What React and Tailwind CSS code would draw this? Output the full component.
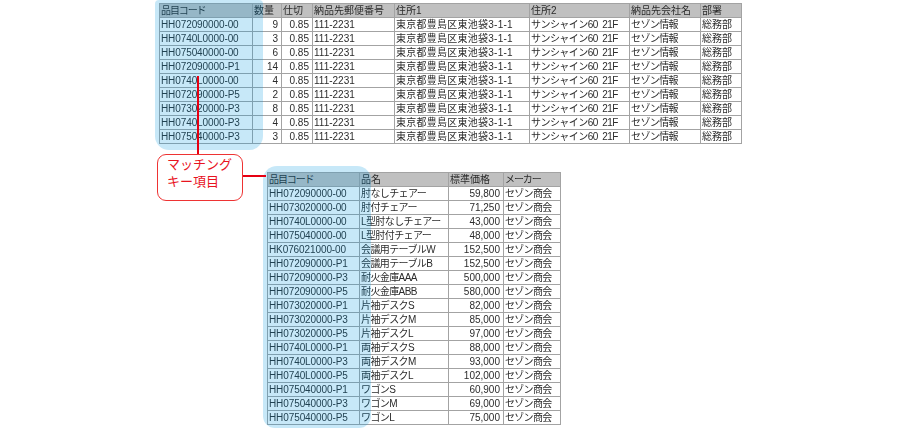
const ORDER_COLS = ['w-[93px]', 'w-[29px]', 'w-[31px]', 'w-[82px]', 'w-[135px]', 'w-[100px]', 'w-[71px]', 'w-[41px]'];
const ORDER_HEAD = ['品目コード', '数量', '仕切', '納品先郵便番号', '住所1', '住所2', '納品先会社名', '部署'];
const ORDER_TRACK = ['tracking-[-0.1px]', '', '', '', 'tracking-[0.25px]', 'tracking-[-0.55px]', 'tracking-[-0.6px]', ''];
const ORDERS = [
  ['HH072090000-00', 9],
  ['HH0740L0000-00', 3],
  ['HH075040000-00', 6],
  ['HH072090000-P1', 14],
  ['HH0740L0000-00', 4],
  ['HH072090000-P5', 2],
  ['HH073020000-P3', 8],
  ['HH0740L0000-P3', 4],
  ['HH075040000-P3', 3],
];

const ITEM_COLS = ['w-[92px]', 'w-[89px]', 'w-[55px]', 'w-[57px]'];
const ITEM_HEAD = ['品目コード', '品名', '標準価格', 'メーカー'];
const ITEM_TRACK = ['tracking-[-0.1px]', 'tracking-[-0.6px]', '', 'tracking-[-0.7px]'];
const ITEMS = [
  ['HH072090000-00', '肘なしチェアー', '59,800'],
  ['HH073020000-00', '肘付チェアー', '71,250'],
  ['HH0740L0000-00', 'L型肘なしチェアー', '43,000'],
  ['HH075040000-00', 'L型肘付チェアー', '48,000'],
  ['HK076021000-00', '会議用テーブルW', '152,500'],
  ['HH072090000-P1', '会議用テーブルB', '152,500'],
  ['HH072090000-P3', '耐火金庫AAA', '500,000'],
  ['HH072090000-P5', '耐火金庫ABB', '580,000'],
  ['HH073020000-P1', '片袖デスクS', '82,000'],
  ['HH073020000-P3', '片袖デスクM', '85,000'],
  ['HH073020000-P5', '片袖デスクL', '97,000'],
  ['HH0740L0000-P1', '両袖デスクS', '88,000'],
  ['HH0740L0000-P3', '両袖デスクM', '93,000'],
  ['HH0740L0000-P5', '両袖デスクL', '102,000'],
  ['HH075040000-P1', 'ワゴンS', '60,900'],
  ['HH075040000-P3', 'ワゴンM', '69,000'],
  ['HH075040000-P5', 'ワゴンL', '75,000'],
];

const CELL = 'h-[14px] border border-[#a3a3a3] px-px py-0 leading-[12px] whitespace-pre overflow-hidden';

function Sheet({ cols, head, rows, numeric, track }) {
  return (
    <table className="table-fixed border-collapse text-[10px] text-[#2b2b2b] blur-[0.3px]">
      <colgroup>
        {cols.map((c, i) => <col key={i} className={c} />)}
      </colgroup>
      <thead>
        <tr>
          {head.map((h) => (
            <th key={h} className={`${CELL} bg-[#c0c0c0] text-left font-normal ${h.includes('ー') ? 'tracking-[-1.1px]' : ''}`}>{h}</th>
          ))}
        </tr>
      </thead>
      <tbody>
        {rows.map((row, r) => (
          <tr key={r}>
            {row.map((v, c) => (
              <td key={c} className={`${CELL} ${track[c]} ${numeric.includes(c) ? 'text-right pr-[3px]' : 'text-left'}`}>{v}</td>
            ))}
          </tr>
        ))}
      </tbody>
    </table>
  );
}

export default function App() {
  const orderRows = ORDERS.map(([code, qty]) => [
    code, qty, '0.85', '111-2231', '東京都豊島区東池袋3-1-1', 'サンシャイン60  21F', 'セゾン情報', '総務部',
  ]);
  const itemRows = ITEMS.map((it) => [...it, 'セゾン商会']);

  return (
    <div className="h-[428px] w-[900px] overflow-hidden bg-white pl-[157px] pt-[3px] font-['Liberation_Sans','Noto_Sans_CJK_JP',sans-serif]">
      <div className="relative ml-[2px] w-fit">
        <Sheet cols={ORDER_COLS} head={ORDER_HEAD} rows={orderRows} numeric={[1, 2]} track={ORDER_TRACK} />
        <div className="absolute -left-[4px] -top-[3px] h-[150px] w-[108px] rounded-b-[14px] rounded-t-[4px] bg-[#0096de]/[0.22]" />
        <div className="absolute left-[38px] top-[73px] h-[78px] w-[2px] bg-[#e60012]" />
      </div>

      <div className="mt-[10px] flex items-start">
        <div className="flex h-[47px] w-[86px] flex-col justify-center rounded-[9px] border border-[#ee3333] bg-white pb-[9px] pl-[9px] text-[13px] leading-[17px] text-[#e8141f]">
          <span>マッチング</span>
          <span>キー項目</span>
        </div>
        <div className="relative z-10 mt-[21px] h-[2px] w-[23px] bg-[#e60012]" />
        <div className="relative ml-px mt-[18px]">
          <Sheet cols={ITEM_COLS} head={ITEM_HEAD} rows={itemRows} numeric={[2]} track={ITEM_TRACK} />
          <div className="absolute -left-[4px] -top-[6px] h-[262px] w-[108px] rounded-t-[14px] rounded-b-[12px] bg-[#0096de]/[0.22]" />
        </div>
      </div>
    </div>
  );
}
